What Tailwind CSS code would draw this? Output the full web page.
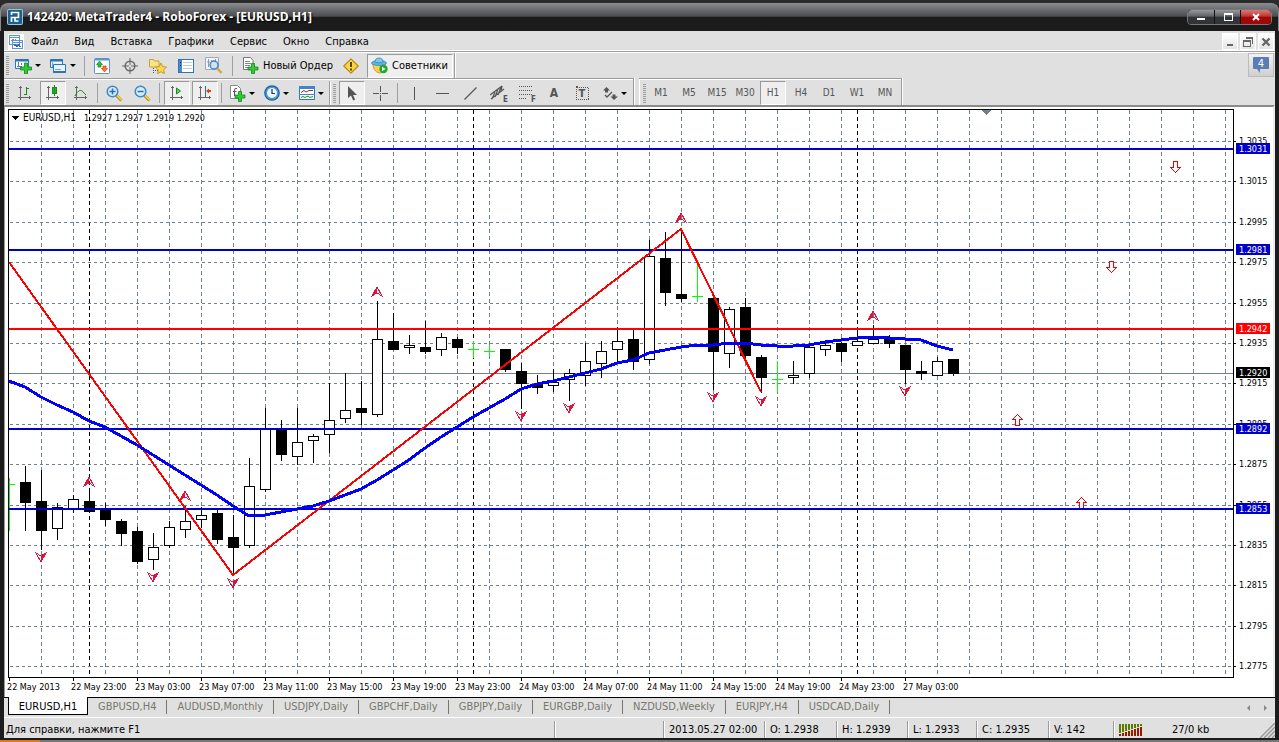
<!DOCTYPE html>
<html lang="ru">

<head>
    <meta charset="UTF-8">
    <meta name="viewport" content="width=device-width, initial-scale=1.0">
    <title>142420: MetaTrader4 - RoboForex - [EURUSD,H1]</title>
    <script src="https://cdn.jsdelivr.net/npm/@tailwindcss/browser@4"></script>
</head>

<body class="h-screen overflow-hidden flex flex-col bg-[#1c1c1c] font-['DejaVu_Sans_Condensed','DejaVu_Sans',sans-serif] text-[11px] leading-[14px] text-black">
    <!-- Title bar -->
    <header class="shrink-0 bg-[#2b2b2b] pt-[3px]">
        <div class="h-7 rounded-t-lg border-t border-x border-[#8c8c90] bg-linear-to-b from-[#86878b] from-0% via-[#4c4d50] via-45% to-[#1b1b1c] to-50% flex items-center pl-[6px] pr-[6px] pb-[2px]">
            <svg class="size-4 mr-1" viewBox="0 0 16 16">
                <rect width="16" height="16" rx="2" fill="#9cc4dc" />
                <rect x="1" y="1" width="14" height="14" rx="1" fill="#1d5f8c" />
                <path d="M4.500 13V8.500h7V3.500h-7V6M8 8.500V12h3.500" fill="none" stroke="#fff" stroke-width="1.700" />
            </svg>
            <h1 class="flex-1 font-['Open_Sans','Noto_Sans',sans-serif] text-[12px] font-bold text-white whitespace-nowrap [text-shadow:1px_1px_1px_#000]">142420: MetaTrader4 - RoboForex - [EURUSD,H1]</h1>
            <div class="flex gap-px h-4 rounded bg-[#111] border border-[#77787b] text-white">
                <button aria-label="Свернуть" class="w-[26px] grid place-items-center rounded-l bg-linear-to-b from-[#98999c] via-[#606165] via-45% to-[#333437] to-50%">
                    <svg width="10" height="8"><rect y="5" x="1" width="8" height="2" fill="#fff" /></svg>
                </button>
                <button aria-label="Развернуть" class="w-[25px] grid place-items-center bg-linear-to-b from-[#98999c] via-[#606165] via-45% to-[#333437] to-50%">
                    <svg width="10" height="8" shape-rendering="crispEdges"><path d="M1 0h9v8H1zM2 2v5h7V2z" fill="#fff" fill-rule="evenodd" /></svg>
                </button>
                <button aria-label="Закрыть" class="w-[30px] grid place-items-center rounded-r bg-linear-to-b from-[#d87878] via-[#c03030] via-45% to-[#a00808] to-50%">
                    <svg width="10" height="8"><path d="M2 1l6 6M8 1L2 7" stroke="#fff" stroke-width="2" /></svg>
                </button>
            </div>
        </div>
    </header>

    <div class="flex-1 min-h-0 flex flex-col mx-1 bg-[#e0e0e0]">
        <!-- Menu -->
        <nav class="shrink-0 h-[19px] flex items-center gap-4 pl-1 pt-[2px]">
            <svg class="size-4 -mr-[9px]" viewBox="0 0 16 16" shape-rendering="crispEdges">
                <rect width="16" height="16" fill="#fff" />
                <path d="M1.500 1.500h10v9h-10zM1.500 3.500h10M4.500 6.500h10v8h-10zM4.500 8.500h10" fill="none" stroke="#5b93d3" />
                <path d="M3 7l2-2 1 2 2-2" fill="none" stroke="#5b93d3" />
                <path d="M6 12l1-2 2 3 2-3 1 3 1-1" fill="none" stroke="#2d6bb8" />
            </svg>
            <a href="#">Файл</a>
            <a href="#">Вид</a>
            <a href="#">Вставка</a>
            <a href="#">Графики</a>
            <a href="#">Сервис</a>
            <a href="#">Окно</a>
            <a href="#">Справка</a>
            <div class="ml-auto flex gap-[2px] pr-px">
                <button aria-label="Свернуть окно" class="w-4 h-[17px] grid place-items-center border border-white bg-linear-to-b from-white to-[#e4e4e4]">
                    <svg width="12" height="12"><rect x="3" y="8" width="6" height="2" fill="#666" /></svg>
                </button>
                <button aria-label="Восстановить окно" class="w-4 h-[17px] grid place-items-center border border-white bg-linear-to-b from-white to-[#e4e4e4]">
                    <svg width="12" height="12" shape-rendering="crispEdges"><path d="M4 2.500h6.500V8M3.500 1.500h7M1.500 5v5.500h7V5zM1 5.500h8M1 4.500h8" fill="none" stroke="#666" /></svg>
                </button>
                <button aria-label="Закрыть окно" class="w-4 h-[17px] grid place-items-center border border-white bg-linear-to-b from-white to-[#e4e4e4]">
                    <svg width="12" height="12"><path d="M2.500 2.500l7 7M9.500 2.500l-7 7" stroke="#666" stroke-width="2.400" /></svg>
                </button>
            </div>
        </nav>

        <!-- Main toolbar -->
        <div class="shrink-0 h-[28px] border-t border-white flex">
            <div class="flex-1 flex border-t border-[#9c9c9c]">
                <div class="flex-1 flex items-center border-t border-white">
                    <div class="flex items-center h-full pl-[2px] pr-px border-r border-[#9c9c9c] shadow-[1px_0_0_#fff]">
                        <span class="w-[3px] h-[19px] mr-[2px] bg-[repeating-linear-gradient(#9c9c9c_0_1px,#e0e0e0_1px_2px)]"></span>
                        <button aria-label="Новый график" class="w-[35px] h-6 flex items-center gap-[3px] pl-[3px]">
                            <svg width="18" height="16" viewBox="0 0 18 16">
                                <path d="M1.500 1.500h13v9h-13z" fill="#fff" stroke="#2f74b5" />
                                <path d="M1.500 2.500h13" stroke="#2f74b5" stroke-width="2" />
                                <path d="M4.500 4v5M3 8.500h5M7.500 5v2" stroke="#3f7fbf" />
                                <path d="M10.500 5h3v4h4v3h-4v4h-3v-4h-4V9h4z" fill="#35c735" stroke="#0b8a1c" stroke-width=".8" />
                            </svg>
                            <svg width="6" height="3"><path d="M0 0h6L3 3z" /></svg>
                        </button>
                        <button aria-label="Профили" class="w-[35px] h-6 flex items-center gap-[3px] pl-[3px]">
                            <svg width="18" height="16" viewBox="0 0 18 16">
                                <path d="M1.500 1.500h12v8h-12z" fill="#e8f3fc" stroke="#2f74b5" />
                                <path d="M1.500 2.500h12" stroke="#2f74b5" stroke-width="2" />
                                <path d="M4.500 6.500h12v8h-12z" fill="#e8f3fc" stroke="#2f74b5" />
                                <path d="M4.500 14h12" stroke="#2f74b5" stroke-width="2" />
                                <path d="M3.500 4v5M6 11.500h6" stroke="#7aa8d6" />
                            </svg>
                            <svg width="6" height="3"><path d="M0 0h6L3 3z" /></svg>
                        </button>
                        <span class="w-px h-5 mx-[3px] bg-[#a0a0a0]"></span>
                        <button aria-label="Обзор рынка" class="w-7 h-6 grid place-items-center">
                            <svg width="16" height="16" viewBox="0 0 16 16">
                                <rect x=".5" y=".5" width="15" height="15" rx="1" fill="#fff" stroke="#5b93d3" />
                                <path d="M1 1.500h14" stroke="#5b93d3" stroke-width="2" />
                                <path d="M5.500 3l3 3.500H7V9H4V6.500H2.500z" fill="#2fbf2f" stroke="#128a12" stroke-width=".7" />
                                <path d="M10.500 14l3-3.500H12V8H9v2.500H7.500z" fill="#ff7a3a" stroke="#d33a0a" stroke-width=".7" />
                            </svg>
                        </button>
                        <button aria-label="Окно данных" class="w-7 h-6 grid place-items-center">
                            <svg width="16" height="16" viewBox="0 0 16 16" fill="none" stroke="#666">
                                <circle cx="8" cy="8" r="4.800" stroke-width="1.500" />
                                <path d="M8 0v7M8 9v7M0 8h7M9 8h7" />
                            </svg>
                        </button>
                        <button aria-label="Навигатор" class="w-7 h-6 grid place-items-center">
                            <svg width="18" height="16" viewBox="0 0 18 16">
                                <path d="M.5 1.500h4l1 1.500h4.500v6H.5z" fill="#fbe38a" stroke="#c9a227" />
                                <path d="M4.500 10v5M6 12.500h3" stroke="#555" stroke-dasharray="1 1" />
                                <path d="M12 5l1.700 3.600 3.900.5-2.900 2.700.7 3.800-3.400-1.900-3.400 1.900.7-3.800-2.900-2.700 3.900-.5z" fill="#ffd94a" stroke="#b98a10" stroke-width=".8" />
                            </svg>
                        </button>
                        <button aria-label="Терминал" class="w-7 h-6 grid place-items-center">
                            <svg width="16" height="14" viewBox="0 0 16 14" shape-rendering="crispEdges">
                                <path d="M.5.5h15v13H.5z" fill="#fff" stroke="#2f74b5" />
                                <path d="M1 1h3v12H1z" fill="#4a8ac8" />
                                <path d="M5 3.500h9M5 6.500h9M5 9.500h9" stroke="#b9cde6" />
                                <path d="M2 3h1v1H2zM2 6h1v1H2z" fill="#102040" />
                            </svg>
                        </button>
                        <button aria-label="Тестер стратегий" class="w-7 h-6 grid place-items-center">
                            <svg width="18" height="17" viewBox="0 0 18 17">
                                <path d="M.5.5h13v12H.5z" fill="#f4f4f4" stroke="#9ab" />
                                <path d="M3.500 2v8M6.500 3v7M2 5h3M10.500 2v4" stroke="#9a9a9a" />
                                <path d="M12 11l4.500 5" stroke="#d9a441" stroke-width="2.500" />
                                <circle cx="9" cy="8" r="4" fill="#c6e2f7" fill-opacity=".85" stroke="#3b7fc0" stroke-width="1.300" />
                            </svg>
                        </button>
                        <span class="w-px h-5 mx-[4px] bg-[#a0a0a0]"></span>
                        <button class="h-6 flex items-center gap-1 pl-[5px] pr-1 whitespace-nowrap">
                            <svg width="17" height="17" viewBox="0 0 17 17">
                                <path d="M1.500.5h7l2.500 3v9H1.500z" fill="#fff" stroke="#777" />
                                <path d="M3 4.500h5M3 6.500h6M3 8.500h5M3 10.500h3" stroke="#888" />
                                <path d="M9.500 6.500h3v3.500H16v3h-3.500v3.500h-3V13H6v-3h3.500z" fill="#35c735" stroke="#0b8a1c" stroke-width=".8" />
                            </svg>
                            Новый Ордер
                        </button>
                        <button aria-label="MetaEditor" class="w-7 h-6 grid place-items-center">
                            <svg width="16" height="16" viewBox="0 0 16 16">
                                <path d="M8 .8L15.200 8 8 15.200.8 8z" fill="#f8d648" stroke="#b98a10" stroke-width="1.200" stroke-linejoin="round" />
                                <path d="M8 4v5M8 10.500v2" stroke="#4a3300" stroke-width="1.800" />
                            </svg>
                        </button>
                        <button class="h-6 ml-[2px] flex items-center gap-1 pl-[3px] pr-1 whitespace-nowrap bg-[#efefef] border border-t-[#999] border-l-[#999] border-r-white border-b-white">
                            <svg width="17" height="17" viewBox="0 0 17 17">
                                <path d="M2 7c0 6 4 9 7 9s5-4 5-9z" fill="#f7d34a" stroke="#b98a10" stroke-width=".8" />
                                <ellipse cx="8" cy="6" rx="7.500" ry="2.500" fill="#5fb4e0" stroke="#2d7fb0" stroke-width=".7" />
                                <path d="M4 5c0-3 1.500-4 4-4s4 1 4 4c-2 1-6 1-8 0z" fill="#7cc8ee" stroke="#2d7fb0" stroke-width=".7" />
                                <circle cx="12.500" cy="12" r="4.200" fill="#1faa2e" />
                                <path d="M11 9.700v4.600l3.500-2.300z" fill="#fff" />
                            </svg>
                            Советники
                        </button>
                    </div>
                    <button aria-label="Сообщения: 4" class="relative ml-auto mr-px self-start w-[26px] h-6 grid place-items-center border border-[#bbb] bg-linear-to-b from-[#f2f2f2] to-[#cfcfcf]">
                        <svg width="16" height="16" viewBox="0 0 16 16"><path d="M1 0h14q1 0 1 1v10q0 1-1 1H7v4l-3-4H1q-1 0-1-1V1q0-1 1-1z" fill="#5a7db5" /></svg>
                        <span class="absolute inset-x-0 top-[3px] text-center text-white leading-[13px]">4</span>
                    </button>
                </div>
            </div>
        </div>

        <!-- Charts, line studies and timeframes -->
        <div class="shrink-0 h-[27px] flex gap-[5px] text-[#555]">
            <div class="flex items-center h-full pl-[2px] pt-[2px] border-t border-r border-[#9c9c9c] shadow-[inset_0_1px_0_#fff,1px_0_0_#fff]">
                <span class="w-[3px] h-[19px] mr-[2px] bg-[repeating-linear-gradient(#9c9c9c_0_1px,#e0e0e0_1px_2px)]"></span>
                <button aria-label="Бары" class="w-7 h-6 grid place-items-center">
                    <svg width="16" height="16" viewBox="0 0 16 16" fill="none" stroke="#666" shape-rendering="crispEdges">
                        <path d="M3.500 1v14M1 12.500h13M2 2.500h3M12.500 11v3" />
                        <path d="M9.500 2v8M9 3.500h3M7 9.500h2" stroke="#1a8c1a" />
                    </svg>
                </button>
                <button aria-label="Японские свечи" class="w-[26px] mx-px h-6 grid place-items-center bg-[#efefef] border border-t-[#999] border-l-[#999] border-r-white border-b-white">
                    <svg width="16" height="16" viewBox="0 0 16 16" fill="none" stroke="#666" shape-rendering="crispEdges">
                        <path d="M3.500 1v14M1 12.500h13M2 2.500h3M12.500 11v3" />
                        <path d="M9.500 0v11M7.500 2.500h4v6h-4z" stroke="#1a8c1a" fill="#2fae2f" />
                    </svg>
                </button>
                <button aria-label="Линия" class="w-7 h-6 grid place-items-center">
                    <svg width="16" height="16" viewBox="0 0 16 16" fill="none" stroke="#666">
                        <path d="M3.500 1v14M1 12.500h13M2 2.500h3M12.500 11v3" shape-rendering="crispEdges" />
                        <path d="M2 11c3-6 6-7 8-4l3 3" stroke="#1a8c1a" />
                    </svg>
                </button>
                <span class="w-px h-5 mx-[2px] bg-[#a0a0a0]"></span>
                <button aria-label="Приблизить" class="w-7 h-6 grid place-items-center">
                    <svg width="17" height="17" viewBox="0 0 17 17">
                        <path d="M10 10l5.500 5.500" stroke="#b98a10" stroke-width="3" />
                        <path d="M10.500 10l5 5" stroke="#f5d657" stroke-width="1.500" />
                        <circle cx="6.500" cy="6.500" r="5.300" fill="#d6ebfa" stroke="#3b8ac8" stroke-width="1.500" />
                        <path d="M3.500 6.500h6M6.500 3.500v6" stroke="#2a70b0" stroke-width="1.500" />
                    </svg>
                </button>
                <button aria-label="Отдалить" class="w-7 h-6 grid place-items-center">
                    <svg width="17" height="17" viewBox="0 0 17 17">
                        <path d="M10 10l5.500 5.500" stroke="#b98a10" stroke-width="3" />
                        <path d="M10.500 10l5 5" stroke="#f5d657" stroke-width="1.500" />
                        <circle cx="6.500" cy="6.500" r="5.300" fill="#d6ebfa" stroke="#3b8ac8" stroke-width="1.500" />
                        <path d="M3.500 6.500h6" stroke="#2a70b0" stroke-width="1.500" />
                    </svg>
                </button>
                <span class="w-px h-5 mx-[3px] bg-[#a0a0a0]"></span>
                <button aria-label="Автопрокрутка" class="w-[26px] mx-px h-6 grid place-items-center bg-[#efefef] border border-t-[#999] border-l-[#999] border-r-white border-b-white">
                    <svg width="16" height="16" viewBox="0 0 16 16" fill="none" stroke="#666">
                        <path d="M3.500 1v14M1 12.500h13M2 2.500h3M12.500 11v3" shape-rendering="crispEdges" />
                        <path d="M7.500 3v6l4-3z" fill="#5fd05f" stroke="#1a8c1a" />
                    </svg>
                </button>
                <button aria-label="Сдвиг графика" class="w-[26px] mx-px h-6 grid place-items-center bg-[#efefef] border border-t-[#999] border-l-[#999] border-r-white border-b-white">
                    <svg width="16" height="16" viewBox="0 0 16 16" fill="none" stroke="#666">
                        <path d="M3.500 1v14M1 12.500h13M2 2.500h3M12.500 11v3" shape-rendering="crispEdges" />
                        <path d="M8.500 1v11" stroke="#2a70b0" shape-rendering="crispEdges" />
                        <path d="M9 6l3-2.500V5h2v2h-2v1.500z" fill="#d84315" stroke="none" />
                    </svg>
                </button>
                <span class="w-px h-5 mx-[2px] bg-[#a0a0a0]"></span>
                <button aria-label="Индикаторы" class="w-[35px] h-6 flex items-center gap-[3px] pl-[5px]">
                    <svg width="17" height="17" viewBox="0 0 17 17">
                        <path d="M1.500.5h7l3 3v10h-10z" fill="#fff" stroke="#888" />
                        <path d="M8 3.500q-2.500-1-2.500 1.500v6M4 6.500h3.500" fill="none" stroke="#555" />
                        <path d="M9.500 6.500h3v3.500H16v3h-3.500v3.500h-3V13H6v-3h3.500z" fill="#35c735" stroke="#0b8a1c" stroke-width=".8" />
                    </svg>
                    <svg width="6" height="3"><path d="M0 0h6L3 3z" /></svg>
                </button>
                <button aria-label="Периодичность" class="w-[35px] h-6 flex items-center gap-[3px] pl-[5px]">
                    <svg width="16" height="16" viewBox="0 0 16 16">
                        <circle cx="8" cy="8" r="7.800" fill="#1c5f9e" />
                        <circle cx="8" cy="8" r="6.600" fill="#4a98dc" />
                        <circle cx="8" cy="8" r="5" fill="#eef7ff" />
                        <path d="M8 4v4.500h3" fill="none" stroke="#234" stroke-width="1.200" />
                    </svg>
                    <svg width="6" height="3"><path d="M0 0h6L3 3z" /></svg>
                </button>
                <button aria-label="Шаблоны" class="w-[35px] h-6 flex items-center gap-[3px] pl-[5px]">
                    <svg width="16" height="14" viewBox="0 0 16 14">
                        <path d="M.5.5h15v13H.5z" fill="#fff" stroke="#2f74b5" />
                        <path d="M0 1.500h16" stroke="#3f86cc" stroke-width="3" />
                        <path d="M0 8.500h16" stroke="#3f86cc" />
                        <path d="M2 6.500l3-2 2 1.500 3-1.500h4" fill="none" stroke="#a03020" />
                        <path d="M2 11.500l2-1 2 1 3-1.500 2 1.500 3-1" fill="none" stroke="#1a8c1a" />
                    </svg>
                    <svg width="6" height="3"><path d="M0 0h6L3 3z" /></svg>
                </button>
                <span class="w-px h-[25px] mr-[3px] bg-[#9c9c9c] shadow-[1px_0_0_#fff]"></span>
                <span class="w-[3px] h-[19px] mr-[2px] bg-[repeating-linear-gradient(#9c9c9c_0_1px,#e0e0e0_1px_2px)]"></span>
                <button aria-label="Курсор" class="w-[26px] mx-px h-6 grid place-items-center bg-[#efefef] border border-t-[#999] border-l-[#999] border-r-white border-b-white">
                    <svg width="10" height="15" viewBox="0 0 10 15"><path d="M1 0v12l3-2.500 2.200 5 2-1L6 9h4z" fill="#555" /></svg>
                </button>
                <button aria-label="Перекрестие" class="w-7 h-6 grid place-items-center">
                    <svg width="15" height="15" shape-rendering="crispEdges"><path d="M7.500 0v6M7.500 9v6M0 7.500h6M9 7.500h6M7 7.500h1" stroke="#555" /></svg>
                </button>
                <span class="w-px h-5 ml-[3px] mr-[2px] bg-[#a0a0a0]"></span>
                <button aria-label="Вертикальная линия" class="w-7 h-6 grid place-items-center">
                    <svg width="13" height="13" shape-rendering="crispEdges"><path d="M6.500 0v13" stroke="#555" /></svg>
                </button>
                <button aria-label="Горизонтальная линия" class="w-7 h-6 grid place-items-center">
                    <svg width="13" height="13" shape-rendering="crispEdges"><path d="M0 6.500h13" stroke="#555" /></svg>
                </button>
                <button aria-label="Трендовая линия" class="w-7 h-6 grid place-items-center">
                    <svg width="13" height="13"><path d="M.5 12.500l12-12" stroke="#555" stroke-width="1.200" /></svg>
                </button>
                <button aria-label="Каналы" class="relative w-7 h-6 grid place-items-center">
                    <svg width="16" height="16" viewBox="0 0 16 16" fill="none" stroke="#555">
                        <path d="M0 10L12 1M1 14L14 4M2 14L5 7M5 12l3-8M8 10l3-8M11 7l1-6" stroke-width="1.200" />
                    </svg>
                    <span class="absolute right-1 bottom-px text-[8px] leading-[9px] font-bold">E</span>
                </button>
                <button aria-label="Линии Фибоначчи" class="relative w-7 h-6 grid place-items-center">
                    <svg width="14" height="14" shape-rendering="crispEdges"><path d="M0 .5h14M0 4.500h14M0 8.500h14M0 12.500h8" stroke="#555" stroke-dasharray="1 1" /></svg>
                    <span class="absolute right-1 bottom-px text-[8px] leading-[9px] font-bold">F</span>
                </button>
                <button aria-label="Текст" class="w-7 h-6 text-[12px] font-bold">A</button>
                <button aria-label="Текстовая метка" class="relative w-7 h-6 grid place-items-center">
                    <svg width="13" height="14" shape-rendering="crispEdges"><path d="M.5 1.500h12v12H.5z" fill="none" stroke="#555" stroke-dasharray="1 1" /><path d="M0 0h2v2H0z" fill="#555" /></svg>
                    <span class="absolute inset-x-0 top-[6px] text-center font-bold">T</span>
                </button>
                <button aria-label="Стрелки" class="w-[37px] h-6 flex items-center gap-[3px] pl-[7px]">
                    <svg width="15" height="13" viewBox="0 0 15 13">
                        <path d="M3.500 0L7 3.500H5v2H2v-2H0zM11 13L7.500 9.500h2v-2h3v2H15z" fill="#555" />
                        <path d="M2 8l2 2 5-5" fill="none" stroke="#555" stroke-width="1.300" />
                    </svg>
                    <svg width="6" height="3"><path d="M0 0h6L3 3z" /></svg>
                </button>
            </div>
            <div class="flex items-center h-full pl-[4px] pt-[2px] pr-[2px] border-t border-r border-[#9c9c9c] shadow-[inset_1px_1px_0_#fff,1px_0_0_#fff] text-[10px]">
                <span class="w-[3px] h-[19px] mr-px bg-[repeating-linear-gradient(#9c9c9c_0_1px,#e0e0e0_1px_2px)]"></span>
                <button class="w-7 h-6">M1</button>
                <button class="w-7 h-6">M5</button>
                <button class="w-7 h-6">M15</button>
                <button class="w-7 h-6">M30</button>
                <button class="w-[26px] mx-px h-6 bg-[#efefef] border border-t-[#999] border-l-[#999] border-r-white border-b-white">H1</button>
                <button class="w-7 h-6">H4</button>
                <button class="w-7 h-6">D1</button>
                <button class="w-7 h-6">W1</button>
                <button class="w-7 h-6">MN</button>
            </div>
        </div>

        <!-- Chart window -->
        <main class="flex-1 min-h-0 border-t-2 border-l border-r-2 border-t-[#8a8a86] border-l-[#999] border-r-[#ececec] bg-white">
            <svg id="chart" class="block w-full h-full"></svg>
        </main>

        <!-- Chart tabs -->
        <div class="shrink-0 h-5 flex border-t border-black text-[#77776c] whitespace-nowrap">
            <a href="#" class="h-[18px] ml-1 w-20 text-center bg-white text-black border-x border-b border-black leading-[17px] -mt-px pt-px">EURUSD,H1</a>
            <div class="flex items-center h-[17px] [&>a]:border-r [&>a]:border-[#77776c] [&>a]:pr-[10px] [&>a]:pl-[10px]">
                <a href="#">GBPUSD,H4</a>
                <a href="#">AUDUSD,Monthly</a>
                <a href="#">USDJPY,Daily</a>
                <a href="#">GBPCHF,Daily</a>
                <a href="#">GBPJPY,Daily</a>
                <a href="#">EURGBP,Daily</a>
                <a href="#">NZDUSD,Weekly</a>
                <a href="#">EURJPY,H4</a>
                <a href="#">USDCAD,Daily</a>
            </div>
            <div class="ml-auto mr-2 flex items-center gap-[14px]">
                <button aria-label="Назад"><svg width="3" height="6"><path d="M3 0v6L0 3z" fill="#888" /></svg></button>
                <button aria-label="Вперёд"><svg width="3" height="6"><path d="M0 0v6l3-3z" fill="#888" /></svg></button>
            </div>
        </div>

        <!-- Status bar -->
        <footer class="shrink-0 h-[21px] border-t border-white flex items-end whitespace-nowrap leading-[18px] [&>span]:border-l [&>span]:border-[#9c9c9c] [&>span]:shadow-[inset_1px_0_0_#fff] [&>span]:h-[17px] [&>span]:pl-[5px]">
            <p class="flex-1 h-[17px] pl-[2px]">Для справки, нажмите F1</p>
            <span class="w-[109px]"></span>
            <span class="w-[101px]">2013.05.27 02:00</span>
            <span class="w-[72px]">O: 1.2938</span>
            <span class="w-[71px]">H: 1.2939</span>
            <span class="w-[69px]">L: 1.2933</span>
            <span class="w-[72px]">C: 1.2935</span>
            <span class="w-[65px]">V: 142</span>
            <span class="w-[162px] flex items-center">
                <svg width="24" height="12" shape-rendering="crispEdges">
                    <path d="M1 0v9M4 0v8M7 0v7M10 0v6M13 0v5M16 0v4M19 0v3M22 0v2" stroke="#5a7a00" stroke-width="2" />
                    <path d="M1 10v2M4 9v3M7 8v4M10 7v5M13 6v6M16 5v7M19 4v8M22 3v9" stroke="#9a1a00" stroke-width="2" />
                </svg>
                <b class="font-normal ml-[29px]">27/0 kb</b>
                <svg class="ml-auto self-end" width="15" height="15"><path d="M0 15L15 0M4 15L15 4M8 15l7-7M12 15l3-3" stroke="#999" stroke-width="1.500" /></svg>
            </span>
        </footer>
        <div class="shrink-0 h-[2px] -mx-1 bg-[#1c1c1c]"></div>
    </div>
    <div class="shrink-0 h-[2px] bg-[#777]"><div class="w-10 h-full bg-[#d9781e]"></div></div>

    <script>
        const svg = document.getElementById('chart');

        // high, body top, body bottom, low, kind: b - bear, w - bull, d - doji
        const bars = [
            [478, 484, 484, 531, 'd'], [466, 482, 503, 531, 'b'], [470, 501, 531, 550, 'b'], [503, 507, 529, 540, 'w'],
            [495, 499, 509, 513, 'w'], [491, 501, 512, 512, 'b'], [503, 510, 520, 526, 'b'], [519, 521, 534, 546, 'b'],
            [527, 531, 562, 564, 'b'], [533, 547, 560, 570, 'w'], [521, 527, 546, 548, 'w'], [506, 521, 530, 538, 'w'],
            [507, 515, 520, 528, 'w'], [510, 513, 540, 544, 'b'], [515, 537, 548, 575, 'b'], [458, 486, 546, 548, 'w'],
            [408, 429, 490, 492, 'w'], [420, 430, 455, 461, 'b'], [408, 442, 457, 465, 'w'], [434, 436, 441, 463, 'w'],
            [383, 420, 435, 453, 'w'], [373, 410, 419, 423, 'w'], [381, 408, 413, 425, 'b'], [301, 339, 415, 417, 'w'],
            [313, 341, 350, 350, 'b'], [335, 345, 348, 354, 'w'], [321, 347, 352, 354, 'b'], [333, 337, 350, 356, 'w'],
            [337, 339, 348, 354, 'b'], [341, 349, 349, 358, 'd'], [345, 351, 351, 356, 'd'], [349, 349, 370, 372, 'b'],
            [363, 371, 384, 409, 'b'], [375, 384, 388, 394, 'b'], [369, 382, 386, 392, 'w'], [369, 373, 380, 401, 'w'],
            [343, 361, 376, 386, 'w'], [341, 351, 364, 378, 'w'], [327, 341, 350, 362, 'w'], [330, 339, 362, 370, 'b'],
            [240, 256, 360, 364, 'w'], [232, 258, 293, 306, 'b'], [229, 294, 299, 302, 'b'], [263, 296, 296, 302, 'd'],
            [295, 298, 352, 390, 'b'], [307, 309, 354, 368, 'w'], [298, 307, 356, 358, 'b'], [355, 357, 378, 393, 'b'],
            [361, 379, 379, 392, 'd'], [361, 375, 378, 384, 'w'], [345, 347, 374, 378, 'w'], [343, 345, 350, 356, 'w'],
            [342, 343, 352, 362, 'b'], [331, 341, 346, 346, 'w'], [325, 339, 344, 344, 'w'], [335, 338, 344, 348, 'b'],
            [345, 345, 370, 384, 'b'], [361, 371, 374, 380, 'b'], [357, 361, 376, 376, 'w'], [359, 359, 374, 376, 'b']
        ];
        const ma = [381, 387, 397, 405, 412, 421, 427, 436, 445, 455, 465, 475, 485, 495, 506, 516, 515, 512, 509, 506,
            501, 495, 489, 480, 470, 460, 448, 437, 427, 417, 408, 399, 389, 384, 381, 377, 373, 369, 363, 360,
            353, 350, 347, 345, 345, 343, 343, 345, 346, 346, 345, 342, 340, 338, 337, 338, 339, 340, 346, 350];
        const dates = ['22 May 2013', '22 May 23:00', '23 May 03:00', '23 May 07:00', '23 May 11:00', '23 May 15:00',
            '23 May 19:00', '23 May 23:00', '24 May 03:00', '24 May 07:00', '24 May 11:00', '24 May 15:00',
            '24 May 19:00', '24 May 23:00', '27 May 03:00'];
        const levels = [[148, '1.3031', '#0000c8'], [249, '1.2981', '#0000c8'], [328, '1.2942', '#ff0000'],
            [428, '1.2892', '#0000c8'], [508, '1.2853', '#0000c8']];
        const fractalsUp = [[89, 477], [185, 491], [377, 287], [681, 213], [873, 311]];
        const fractalsDown = [[41, 562], [153, 582], [233, 588], [521, 421], [569, 413], [713, 402], [761, 406], [905, 396]];

        function draw() {
            const right = svg.clientWidth - 40 + 5;
            const bottom = svg.clientHeight - 20 + 107;
            const barX = i => 9 + i * 16;
            let s = '';

            // grid
            for (let x = 41; x < right; x += 32) s += `<path d="M${x + .5} 110V${bottom}" stroke="#708090" stroke-dasharray="4 3"/>`;
            for (const x of [89, 473, 857]) s += `<path d="M${x + .5} 110V${bottom}" stroke="#000" stroke-dasharray="4 3"/>`;
            for (let i = 0; i < 14; i++) {
                const y = Math.round(141 + i * 40.4);
                s += `<path d="M10 ${y + .5}H${right}" stroke="#708090" stroke-dasharray="3 3"/>`;
                s += `<path d="M${right} ${y + .5}h3" stroke="#000"/>`;
                s += `<text x="${right + 6}" y="${y + 3}">${(1.3035 - i * .002).toFixed(4)}</text>`;
            }
            s += `<path d="M9 373.5H${right}" stroke="#708090"/>`;

            // candles
            bars.forEach(([h, t, b, l, kind], i) => {
                const x = barX(i);
                if (kind === 'd') {
                    s += `<path d="M${x + .5} ${h}V${l}M${Math.max(x - 5, 9)} ${t + .5}H${x + 6}" stroke="#00ff00"/>`;
                    return;
                }
                s += `<path d="M${x + .5} ${h}V${l}" stroke="#000"/>`;
                s += `<rect x="${x - 4.5}" y="${t + .5}" width="10" height="${b - t - 1}" stroke="#000" fill="${kind === 'b' ? '#000' : '#fff'}"/>`;
            });

            // fractals
            for (const [x, y] of fractalsUp) {
                s += `<path d="M${x} ${y}l-5 9 5-3z" fill="#dc143c" stroke="none"/><path d="M${x} ${y}l5 9-5-3-5 3z" stroke="#dc143c"/>`;
            }
            for (const [x, y] of fractalsDown) {
                s += `<path d="M${x} ${y}l5-9-5 3z" fill="#dc143c" stroke="none"/><path d="M${x} ${y}l5-9-5 3-5-3z" stroke="#dc143c"/>`;
            }

            // signal arrows
            for (const [x, y] of [[1175, 161], [1111, 261]]) {
                s += `<path d="M${x - 1.5} ${y + .5}h4v6h3l-5 5-5-5h3z" fill="#fff" stroke="#f00000"/>`;
            }
            for (const [x, y] of [[1017, 426], [1081, 509]]) {
                s += `<path d="M${x - 1.5} ${y - .5}h4v-6h3l-5-5-5 5h3z" fill="#fff" stroke="#f00000"/>`;
            }

            // levels, zigzag, moving average
            for (const [y, , color] of levels) s += `<path d="M9 ${y + 1}H${right}" stroke="${color}" stroke-width="2"/>`;
            s += '<path d="M9 262L233 575L681 229L761 392" stroke="#ff0000" stroke-width="2"/>';
            s += `<polyline points="${ma.map((y, i) => barX(i) + ',' + y).join(' ')}" stroke="#0000ff" stroke-width="3"/>`;

            // frame
            s += `<path d="M8.5 ${bottom + .5}V109.5H${right + .5}V${bottom + .5}z" stroke="#000"/>`;
            s += '<path d="M981 110h10l-5 5z" fill="#708090"/><path d="M11 116h8l-4 4z" fill="#000"/>';
            s += '<text x="23" y="121" font-size="10">EURUSD,H1</text><text x="84" y="121">1.2927 1.2927 1.2919 1.2920</text>';
            dates.forEach((d, i) => {
                s += `<path d="M${barX(i * 4) + .5} ${bottom}v4" stroke="#000"/><text x="${barX(i * 4) - 2}" y="${bottom + 13}">${d}</text>`;
            });
            for (const [y, label, color] of [...levels, [372, '1.2920', '#000']]) {
                s += `<rect x="${right + 3}" y="${y - 5}" width="34" height="11" fill="${color}"/>`;
                s += `<text x="${right + 6}" y="${y + 4}" style="fill:#fff">${label}</text>`;
            }
            svg.innerHTML = `<g transform="translate(-5 -107)" fill="none" font-size="9" shape-rendering="crispEdges">${s}</g>`;
            svg.querySelectorAll('text').forEach(t => t.style.fill || t.setAttribute('fill', '#000'));
        }

        new ResizeObserver(draw).observe(svg);
    </script>
</body>

</html>
